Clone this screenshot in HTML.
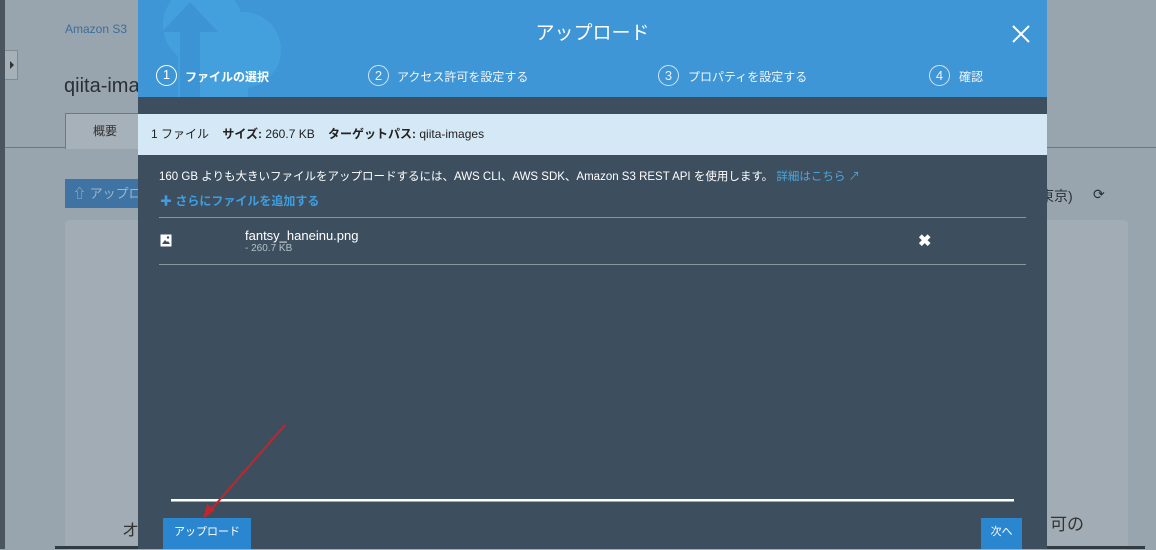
<!DOCTYPE html>
<html><head><meta charset="utf-8"><style>
*{margin:0;padding:0;box-sizing:border-box}
body{width:1156px;height:549px;overflow:hidden;background:#98a5ae;font-family:"Liberation Sans","Noto Sans CJK JP",sans-serif;position:relative}
.a{position:absolute}
</style></head><body>
<div class="a" style="left:0;top:0;width:5px;height:549px;background:#4a5560"></div>
<div class="a" style="left:5px;top:50px;width:13px;height:30px;background:#a6b0b8;border:1px solid #7f8a93;border-left:none"></div>
<div class="a" style="left:10px;top:61px;width:0;height:0;border-left:4px solid #333;border-top:4px solid transparent;border-bottom:4px solid transparent"></div>
<div class="a" style="left:65px;top:22px;font-size:12px;color:#3d6e99">Amazon S3</div>
<div class="a" style="left:64px;top:75px;font-size:20px;color:#2a2f35">qiita-ima</div>
<div class="a" style="left:5px;top:147px;width:1151px;height:1px;background:#6d7880"></div>
<div class="a" style="left:65px;top:113px;width:80px;height:36px;background:#a7b1b9;border:1px solid #6d7880;border-bottom:none;font-size:12px;text-align:center;line-height:34px;color:#333">概要</div>
<div class="a" style="left:65px;top:179px;width:80px;height:29px;background:#3e73a4;color:#9db6cc;font-size:13px;line-height:29px;padding-left:8px">⇧ アップロ</div>
<div class="a" style="left:65px;top:220px;width:1063px;height:330px;background:#a1acb4;border-radius:4px"></div>
<div class="a" style="left:1040px;top:186px;font-size:14px;color:#2a2f35">東京)</div>
<div class="a" style="left:1093px;top:186px;font-size:14px;color:#2a2f35">⟳</div>
<div class="a" style="left:122px;top:516px;font-size:17px;color:#333">オ</div>
<div class="a" style="left:1050px;top:510px;font-size:17px;color:#333">可の</div>
<div class="a" style="left:55px;top:546px;width:1090px;height:3px;background:#333b42"></div>
<!-- modal -->
<div class="a" style="left:138px;top:0;width:909px;height:549px;background:#3d4f5e;overflow:hidden">
 <div class="a" style="left:0;top:0;width:909px;height:97px;background:#3f96d6;overflow:hidden">
  <svg class="a" style="left:0;top:-10px" width="160" height="120"><circle cx="65" cy="35" r="40" fill="#44a0dc"/><circle cx="105" cy="60" r="38" fill="#44a0dc"/><rect x="40" y="60" width="70" height="60" fill="#44a0dc"/><path d="M52 12 L24 42 H42 V120 H62 V42 H80 Z" fill="#3d94d4"/></svg>
 </div>
 <div class="a" style="left:0;top:18px;width:909px;text-align:center;color:#fff;font-size:19px">アップロード</div>
 <svg class="a" style="left:874px;top:25px" width="18" height="18"><path d="M1 1L17 17M17 1L1 17" stroke="#fff" stroke-width="2"/></svg>
 <div class="a" style="left:18px;top:65px;width:21px;height:21px;border:1.5px solid #fff;border-radius:50%;color:#fff;font-size:13px;text-align:center;line-height:18px">1</div>
 <div class="a" style="left:47px;top:68px;color:#fff;font-size:12px;font-weight:bold">ファイルの選択</div>
 <div class="a" style="left:230px;top:65px;width:21px;height:21px;border:1px solid #cfe4f5;border-radius:50%;color:#e6f1fa;font-size:13px;text-align:center;line-height:19px">2</div>
 <div class="a" style="left:259px;top:68px;color:#f0f6fb;font-size:12px">アクセス許可を設定する</div>
 <div class="a" style="left:520px;top:65px;width:21px;height:21px;border:1px solid #cfe4f5;border-radius:50%;color:#e6f1fa;font-size:13px;text-align:center;line-height:19px">3</div>
 <div class="a" style="left:550px;top:68px;color:#f0f6fb;font-size:12px">プロパティを設定する</div>
 <div class="a" style="left:791px;top:65px;width:21px;height:21px;border:1px solid #cfe4f5;border-radius:50%;color:#e6f1fa;font-size:13px;text-align:center;line-height:19px">4</div>
 <div class="a" style="left:821px;top:68px;color:#f0f6fb;font-size:12px">確認</div>
 <div class="a" style="left:0;top:114px;width:909px;height:41px;background:#d5e8f5;font-size:12px;color:#222;line-height:41px;padding-left:13px">1 ファイル&nbsp;&nbsp;&nbsp;&nbsp;<b>サイズ:</b> 260.7 KB&nbsp;&nbsp;&nbsp;&nbsp;<b>ターゲットパス:</b> qiita-images</div>
 <div class="a" style="left:21px;top:168px;font-size:11.5px;color:#fff;white-space:nowrap">160 GB よりも大きいファイルをアップロードするには、AWS CLI、AWS SDK、Amazon S3 REST API を使用します。 <span style="color:#4aa8e0">詳細はこちら ↗</span></div>
 <div class="a" style="left:22px;top:192px;font-size:12px;color:#3f9ee0;font-weight:bold">✚ さらにファイルを追加する</div>
 <div class="a" style="left:21px;top:217px;width:867px;height:1px;background:#8a969f"></div>
 <svg class="a" style="left:22px;top:234px" width="12" height="13"><rect x="0.5" y="0.5" width="11" height="12" fill="#fff"/><path d="M2 10 L5 6 L7 8 L8 7 L10 10 Z" fill="#3d4f5e"/><circle cx="8" cy="3.5" r="1.2" fill="#3d4f5e"/></svg>
 <div class="a" style="left:107px;top:228px;font-size:13px;color:#fff">fantsy_haneinu.png</div>
 <div class="a" style="left:107px;top:243px;font-size:10px;color:#b5c0c8">- 260.7 KB</div>
 <div class="a" style="left:780px;top:231px;font-size:16px;color:#fff;font-weight:bold">✖</div>
 <div class="a" style="left:21px;top:264px;width:867px;height:1px;background:#8a969f"></div>
 <div class="a" style="left:33px;top:499px;width:843px;height:3px;background:#fff;border-bottom:1px solid #aaa"></div>
 <div class="a" style="left:25px;top:518px;width:88px;height:31px;background:#2b86d0;color:#fff;font-size:11px;text-align:center;line-height:28px">アップロード</div>
 <div class="a" style="left:843px;top:518px;width:41px;height:31px;background:#2b86d0;color:#fff;font-size:11px;text-align:center;line-height:28px">次へ</div>
</div>
<svg class="a" style="left:195px;top:420px" width="100" height="100"><path d="M90 5 L14 92" stroke="#c0262d" stroke-width="2"/><path d="M8 99 L12 84 L20 90 Z" fill="#c0262d"/></svg>
</body></html>
